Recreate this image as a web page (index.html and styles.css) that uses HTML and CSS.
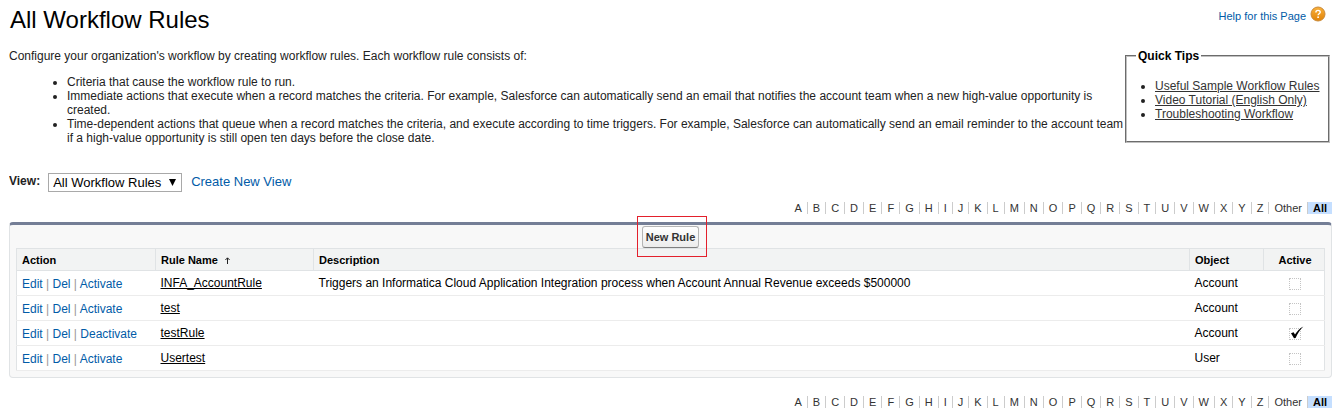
FILE: index.html
```html
<!DOCTYPE html>
<html lang="en">
<head>
    <meta charset="UTF-8">
    <meta name="viewport" content="width=device-width, initial-scale=1.0">
    <title>All Workflow Rules</title>
    <link rel="stylesheet" href="styles.css">
</head>
<body>
    <div class="header">
        <h1>All Workflow Rules</h1>
        <a class="help" href="#">Help for this Page
            <svg class="help-icon" width="16" height="16" viewBox="0 0 16 16">
                <defs>
                    <linearGradient id="orange" x1="0" y1="0" x2="0" y2="1">
                        <stop offset="0" stop-color="#f9b13c"/>
                        <stop offset="1" stop-color="#e18206"/>
                    </linearGradient>
                </defs>
                <circle cx="8" cy="8" r="7" fill="url(#orange)" stroke="#c98a3a"/>
                <path d="M5.9 6.4C5.9 3.7 10.3 3.8 10.2 6.2C10.2 7.7 8.1 7.8 8.1 9.3" fill="none" stroke="#fff" stroke-width="1.4"/>
                <circle cx="8.1" cy="11.2" r="0.9" fill="#fff"/>
            </svg>
        </a>
    </div>

    <div class="intro">
        <div class="description">
            <p>Configure your organization's workflow by creating workflow rules. Each workflow rule consists of:</p>
            <ul>
                <li>Criteria that cause the workflow rule to run.</li>
                <li>Immediate actions that execute when a record matches the criteria. For example, Salesforce can automatically send an email that notifies the account team when a new high-value opportunity is created.</li>
                <li>Time-dependent actions that queue when a record matches the criteria, and execute according to time triggers. For example, Salesforce can automatically send an email reminder to the account team if a high-value opportunity is still open ten days before the close date.</li>
            </ul>
        </div>
        <fieldset class="tips">
            <legend>Quick Tips</legend>
            <ul>
                <li><a href="#">Useful Sample Workflow Rules</a></li>
                <li><a href="#">Video Tutorial (English Only)</a></li>
                <li><a href="#">Troubleshooting Workflow</a></li>
            </ul>
        </fieldset>
    </div>

    <form class="view">
        <label for="view">View:</label>
        <div class="select-box">
            <select id="view">
                <option>All Workflow Rules</option>
            </select>
            <svg class="arrow" width="7" height="7" viewBox="0 0 7 7"><path d="M0 0H7L3.5 7Z"/></svg>
        </div>
        <a href="#">Create New View</a>
    </form>

    <div class="rolodex">
        <a href="#">A</a><a href="#">B</a><a href="#">C</a><a href="#">D</a><a href="#">E</a><a href="#">F</a><a href="#">G</a><a href="#">H</a><a href="#">I</a><a href="#">J</a><a href="#">K</a><a href="#">L</a><a href="#">M</a><a href="#">N</a><a href="#">O</a><a href="#">P</a><a href="#">Q</a><a href="#">R</a><a href="#">S</a><a href="#">T</a><a href="#">U</a><a href="#">V</a><a href="#">W</a><a href="#">X</a><a href="#">Y</a><a href="#">Z</a><a href="#">Other</a><a class="current" href="#">All</a>
    </div>

    <div class="panel">
        <div class="buttons">
            <div class="highlight">
                <button type="button">New Rule</button>
            </div>
        </div>
        <table>
            <thead>
                <tr>
                    <th class="action">Action</th>
                    <th class="name">Rule Name
                        <svg class="sort" width="5" height="7" viewBox="0 0 5 7"><path d="M2.5 7V1M0.4 3L2.5 0.8L4.6 3" fill="none" stroke="#222"/></svg>
                    </th>
                    <th>Description</th>
                    <th class="object">Object</th>
                    <th class="active">Active</th>
                </tr>
            </thead>
            <tbody>
                <tr>
                    <td class="action"><a href="#">Edit</a> | <a href="#">Del</a> | <a href="#">Activate</a></td>
                    <td class="name"><a href="#">INFA_AccountRule</a></td>
                    <td>Triggers an Informatica Cloud Application Integration process when Account Annual Revenue exceeds $500000</td>
                    <td>Account</td>
                    <td class="active"><span class="check"><input type="checkbox" aria-label="INFA_AccountRule active"></span></td>
                </tr>
                <tr>
                    <td class="action"><a href="#">Edit</a> | <a href="#">Del</a> | <a href="#">Activate</a></td>
                    <td class="name"><a href="#">test</a></td>
                    <td></td>
                    <td>Account</td>
                    <td class="active"><span class="check"><input type="checkbox" aria-label="test active"></span></td>
                </tr>
                <tr>
                    <td class="action"><a href="#">Edit</a> | <a href="#">Del</a> | <a href="#">Deactivate</a></td>
                    <td class="name"><a href="#">testRule</a></td>
                    <td></td>
                    <td>Account</td>
                    <td class="active">
                        <span class="check">
                            <input type="checkbox" aria-label="testRule active" checked>
                            <svg class="tick" width="14" height="13" viewBox="0 0 14 13"><path d="M1 7.2L3.6 6.2L5 8.6C7 5 9.6 2.2 13.4 0.4C10 3.8 7.6 7.2 5.6 12L4 12.2Z"/></svg>
                        </span>
                    </td>
                </tr>
                <tr>
                    <td class="action"><a href="#">Edit</a> | <a href="#">Del</a> | <a href="#">Activate</a></td>
                    <td class="name"><a href="#">Usertest</a></td>
                    <td></td>
                    <td>User</td>
                    <td class="active"><span class="check"><input type="checkbox" aria-label="Usertest active"></span></td>
                </tr>
            </tbody>
        </table>
    </div>

    <div class="rolodex bottom">
        <a href="#">A</a><a href="#">B</a><a href="#">C</a><a href="#">D</a><a href="#">E</a><a href="#">F</a><a href="#">G</a><a href="#">H</a><a href="#">I</a><a href="#">J</a><a href="#">K</a><a href="#">L</a><a href="#">M</a><a href="#">N</a><a href="#">O</a><a href="#">P</a><a href="#">Q</a><a href="#">R</a><a href="#">S</a><a href="#">T</a><a href="#">U</a><a href="#">V</a><a href="#">W</a><a href="#">X</a><a href="#">Y</a><a href="#">Z</a><a href="#">Other</a><a class="current" href="#">All</a>
    </div>
</body>
</html>
```

FILE: styles.css
```css
* {
    margin: 0;
    padding: 0;
    box-sizing: border-box;
}

body {
    margin: 0 9px;
    font-family: "Liberation Sans", Arial, Helvetica, sans-serif;
    font-size: 12px;
    line-height: 14px;
    color: #222;
    background-color: #fff;
}

a {
    color: #015ba7;
    text-decoration: none;
}

a:hover {
    text-decoration: underline;
}

.header {
    display: flex;
    justify-content: space-between;
    align-items: flex-start;
    padding: 6px 6px 0 1px;
}

h1 {
    font-size: 24px;
    line-height: 28px;
    font-weight: normal;
    color: #000;
}

.help {
    display: flex;
    align-items: center;
    gap: 4px;
    font-size: 11px;
}

.help-icon {
    margin-bottom: 4px;
}

.intro {
    display: flex;
    align-items: flex-start;
    padding: 15px 2px 0 0;
}

.description {
    flex: 1;
}

.description ul {
    margin-top: 12px;
    padding-left: 58px;
}

.tips {
    width: 205px;
    padding: 16px 0 20px 9px;
    border: 2px groove #c0c0c0;
}

.tips legend {
    padding: 0 2px;
    font-weight: bold;
    color: #000;
}

.tips ul {
    padding-left: 19px;
}

.tips a {
    color: #333;
    text-decoration: underline;
}

.view {
    display: flex;
    align-items: flex-start;
    margin-top: 28px;
    line-height: 17px;
}

.view label {
    font-weight: bold;
}

.view a {
    font-size: 13px;
}

.select-box {
    position: relative;
    margin: 0 9px 0 8px;
}

select {
    display: block;
    width: 134px;
    height: 19px;
    padding: 0 4px;
    appearance: none;
    border: 1px solid #a9a9a9;
    background-color: #fff;
    font-family: inherit;
    font-size: 13px;
    color: #000;
}

.arrow {
    position: absolute;
    top: 6px;
    right: 6px;
    pointer-events: none;
}

.rolodex {
    display: flex;
    justify-content: flex-end;
    margin-top: 10px;
    font-size: 11px;
    line-height: 12px;
}

.rolodex a {
    padding: 0 5px;
    border-right: 1px solid #ccc;
    color: #333;
}

.rolodex .current {
    padding: 0 5px;
    border-right: none;
    background-color: #c5dfff;
    font-weight: bold;
    color: #000;
}

.rolodex.bottom {
    margin-top: 18px;
}

.panel {
    margin-top: 8px;
    padding: 0 6px 6px;
    border: 1px solid #e0e3e5;
    border-top: 3px solid #747e96;
    border-radius: 4px;
    background-color: #f8f8f8;
}

.buttons {
    display: flex;
    justify-content: center;
    padding-top: 1px;
}

.highlight {
    position: relative;
}

/* red frame around the button */
.highlight::after {
    content: "";
    position: absolute;
    top: -10px;
    right: -8px;
    bottom: -9px;
    left: -5px;
    border: 1px solid #e3202c;
    pointer-events: none;
}

button {
    display: block;
    height: 22px;
    padding: 0 3px;
    border: 1px solid #b5b5b5;
    border-bottom-color: #7f7f7f;
    border-radius: 3px;
    background: linear-gradient(#fff, #ececec);
    font-family: inherit;
    font-size: 11px;
    font-weight: bold;
    color: #333;
    cursor: pointer;
}

table {
    width: 100%;
    table-layout: fixed;
    border-collapse: collapse;
    border: 1px solid #e0e3e5;
    background-color: #fff;
    color: #000;
}

th {
    height: 22px;
    padding: 0 5px;
    border: 1px solid #e0e3e5;
    background-color: #f2f3f3;
    font-size: 11px;
    text-align: left;
}

td {
    height: 25px;
    padding: 0 5px;
    border-bottom: 1px solid #ececec;
}

th.action {
    width: 139px;
}

th.name {
    width: 158px;
}

th.object {
    width: 74px;
}

th.active {
    width: 61px;
    padding: 0 4px 0 6px;
    text-align: center;
}

td.action {
    padding-top: 2px;
    color: #999;
}

td.name a {
    color: #000;
    text-decoration: underline;
}

td.active {
    padding: 0 0 0 2px;
    text-align: center;
}

.sort {
    margin-left: 4px;
}

.check {
    display: inline-block;
    position: relative;
    vertical-align: middle;
}

.check input {
    display: block;
    width: 12px;
    height: 12px;
    appearance: none;
    border: 1px dotted #c4c4c4;
}

.tick {
    position: absolute;
    top: -2px;
    left: 1px;
    pointer-events: none;
}
```
